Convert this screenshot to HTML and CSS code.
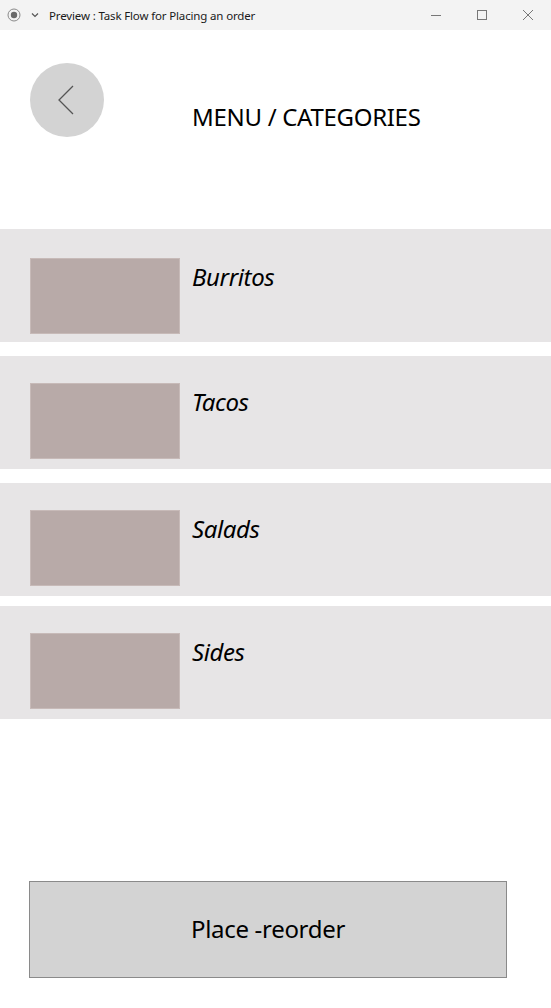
FILE: index.html
```html
<!DOCTYPE html>
<html>
<head>
<meta charset="utf-8">
<link rel="stylesheet" href="styles.css">
</head>
<body>
<div class="titlebar">
  <div class="tb-left">
    <svg class="tb-icon" width="14" height="14" viewBox="0 0 14 14"><circle cx="7" cy="7" r="6" fill="none" stroke="#8a8a8a" stroke-width="1"/><circle cx="7" cy="7" r="3.2" fill="#6a6a6a"/></svg>
    <svg class="tb-chev" width="10" height="10" viewBox="0 0 10 10"><path d="M2 3.5 L5 6.5 L8 3.5" fill="none" stroke="#555" stroke-width="1.2"/></svg>
    <span class="tb-title">Preview : Task Flow for Placing an order</span>
  </div>
  <div class="tb-controls">
    <svg width="12" height="12" viewBox="0 0 12 12"><path d="M1 6.5 H11" stroke="#777" stroke-width="1"/></svg>
    <svg width="12" height="12" viewBox="0 0 12 12"><rect x="1.5" y="1.5" width="9" height="9" fill="none" stroke="#777" stroke-width="1"/></svg>
    <svg width="12" height="12" viewBox="0 0 12 12"><path d="M1 1 L11 11 M11 1 L1 11" stroke="#777" stroke-width="1"/></svg>
  </div>
</div>
<div class="page">
  <header class="header">
    <div class="back">
      <svg width="20" height="32" viewBox="0 0 20 32"><path d="M17 2 L3 16 L17 30" fill="none" stroke="#555" stroke-width="1.3"/></svg>
    </div>
    <h1 class="title">MENU / CATEGORIES</h1>
  </header>
  <div class="list">
    <div class="row row-first"><div class="thumb"></div><span class="label">Burritos</span></div>
    <div class="row"><div class="thumb"></div><span class="label">Tacos</span></div>
    <div class="row"><div class="thumb"></div><span class="label">Salads</span></div>
    <div class="row row-last"><div class="thumb"></div><span class="label">Sides</span></div>
  </div>
  <div class="footer">
    <button class="order-btn">Place -reorder</button>
  </div>
</div>
</body>
</html>
```
FILE: styles.css
```css
* { box-sizing: border-box; }
html, body { margin: 0; padding: 0; background: #ffffff; }
body { font-family: "Noto Sans", "Open Sans", sans-serif; color: #000; width: 551px; height: 1008px; overflow: hidden; }

.titlebar {
  height: 30px;
  background: #f3f3f3;
  display: flex;
  align-items: center;
  justify-content: space-between;
}
.tb-left { display: flex; align-items: center; padding-left: 7px; }
.tb-icon { display: block; }
.tb-chev { display: block; margin-left: 9px; }
.tb-title { margin-left: 9px; font-size: 11.5px; color: #1a1a1a; letter-spacing: -0.15px; }
.tb-controls { display: flex; align-items: center; gap: 34px; padding-right: 17px; }
.tb-controls svg { display: block; }

.header {
  height: 199px;
  display: flex;
  align-items: flex-start;
  padding: 33px 0 0 30px;
}
.back {
  width: 74px;
  height: 74px;
  border-radius: 50%;
  background: #d3d3d3;
  display: flex;
  align-items: center;
  justify-content: center;
  padding-right: 2px;
}
.back svg { display: block; }
.title {
  margin: 38px 0 0 88px;
  font-size: 24px;
  font-weight: 400;
  line-height: 32px;
  letter-spacing: -0.3px;
}

.list { display: flex; flex-direction: column; }
.row {
  height: 113px;
  background: #e7e5e6;
  display: flex;
  align-items: flex-start;
  padding: 27px 0 0 30px;
  margin-bottom: 14px;
}
.row-first { padding-top: 29px; }
.row-last { margin-top: -4px; margin-bottom: 0; }
.thumb {
  width: 150px;
  height: 76px;
  background: #b8aaa8;
  border: 1px solid #c7bab8;
}
.label {
  margin: 3px 0 0 12px;
  font-size: 24px;
  font-style: italic;
  line-height: 32px;
  letter-spacing: -0.4px;
}

.footer { padding: 162px 0 0 29px; }
.order-btn {
  width: 478px;
  height: 97px;
  background: #d3d3d3;
  border: 1px solid #8a8a8a;
  font-family: inherit;
  font-size: 24px;
  color: #000;
  letter-spacing: -0.3px;
  padding: 0 0 2px 0;
}
```
